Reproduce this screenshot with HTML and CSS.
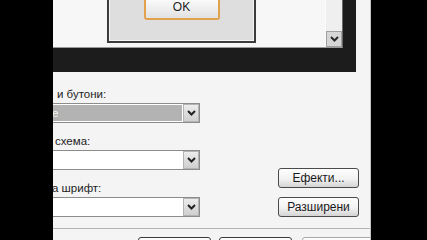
FILE: index.html
```html
<!DOCTYPE html>
<html lang="bg">
    <head>
        <meta charset="UTF-8">
        <title>Свойства на дисплея</title>
        <link rel="stylesheet" href="styles.css">
    </head>
    <body>
        <div class="dlg">
            <div class="preview">
                <div class="monitor">
                    <div class="screen">
                        <div class="msgbox">
                            <div class="okbtn">OK</div>
                        </div>
                        <div class="scroll">
                            <div class="sbtn">
                                <svg width="9" height="6" viewBox="0 0 9 6"><polyline points="1,1 4.5,4.5 8,1" fill="none" stroke="#2a2a2a" stroke-width="2"/></svg>
                            </div>
                        </div>
                    </div>
                </div>
            </div>

            <div class="form">
                <div class="fields">
                    <div class="lbl l1">и бутони:</div>
                    <div class="combo sel">
                        <span class="val">е</span>
                        <span class="drop"><svg width="9" height="6" viewBox="0 0 9 6"><polyline points="1,1 4.5,4.5 8,1" fill="none" stroke="#222" stroke-width="2"/></svg></span>
                    </div>

                    <div class="lbl l2">схема:</div>
                    <div class="combo">
                        <span class="val"></span>
                        <span class="drop"><svg width="9" height="6" viewBox="0 0 9 6"><polyline points="1,1 4.5,4.5 8,1" fill="none" stroke="#222" stroke-width="2"/></svg></span>
                    </div>

                    <div class="lbl l3">а шрифт:</div>
                    <div class="combo">
                        <span class="val"></span>
                        <span class="drop"><svg width="9" height="6" viewBox="0 0 9 6"><polyline points="1,1 4.5,4.5 8,1" fill="none" stroke="#222" stroke-width="2"/></svg></span>
                    </div>
                </div>
                <div class="side">
                    <div class="btn">Ефекти...</div>
                    <div class="btn">Разширени</div>
                </div>
            </div>

            <div class="divider"></div>

            <div class="foot">
                <div class="fbtn"></div>
                <div class="fbtn"></div>
                <div class="fbtn off"></div>
            </div>
        </div>
    </body>
</html>
```

FILE: styles.css
```css
body {
    margin: 0;
    background: #000;
    height: 240px;
    overflow: hidden;
}

.dlg {
    margin-left: 53px;
    width: 318px;
    height: 240px;
    box-sizing: border-box;
    background: #f4f4f4;
    border-right: 1px solid #c4c4c4;
    overflow: hidden;
    font-family: "Liberation Sans", Arial, sans-serif;
    font-size: 11.5px;
    color: #1e1e1e;
}

/* монитор с превю */
.preview {
    display: flex;
    height: 72px;
}

.monitor {
    width: 303px;
    height: 72px;
    box-sizing: border-box;
    background: #1c1c1c;
    padding: 0 13px 24px 0;
}

.screen {
    display: flex;
    height: 48px;
    box-sizing: border-box;
    background: #f7f7f7;
    border-right: 1px solid #6a6a6a;
    border-bottom: 1px solid #9a9a9a;
}

.msgbox {
    margin-left: 54px;
    width: 149px;
    height: 43px;
    box-sizing: border-box;
    border: 2px solid #3c3c3c;
    border-top: 0;
    background: #dedede;
    box-shadow: inset 1px -1px 0 #f4f4f4, inset -1px 0 0 #f4f4f4;
    display: flex;
    justify-content: center;
}

.okbtn {
    width: 76px;
    height: 20px;
    box-sizing: border-box;
    border: 2px solid #e3a04e;
    border-top: 0;
    border-radius: 0 0 3px 3px;
    background: linear-gradient(#fafafa, #e2e2e2);
    text-align: center;
    font-size: 12px;
    line-height: 14px;
    color: #222;
}

.scroll {
    margin-left: auto;
    width: 16px;
    display: flex;
    flex-direction: column;
    background: #efefef;
    border-left: 1px solid #fbfbfb;
}

.sbtn {
    margin-top: auto;
    height: 16px;
    box-sizing: border-box;
    border: 1px solid #a0a0a0;
    background: #d6d6d6;
    display: flex;
    align-items: center;
    justify-content: center;
}

/* полета */
.form {
    display: flex;
    align-items: flex-end;
    padding-top: 15px;
}

.fields {
    width: 147px;
}

.lbl {
    height: 14px;
    line-height: 14px;
    white-space: nowrap;
}

.l1 {
    padding-left: 4px;
}

.l2 {
    margin-top: 11px;
    padding-left: 2px;
}

.l3 {
    margin-top: 11px;
    margin-left: -1px;
}

.combo {
    margin-top: 2px;
    height: 20px;
    box-sizing: border-box;
    border: 1px solid #8c8c8c;
    border-left: 0;
    background: #fff;
    display: flex;
}

.combo .val {
    flex: 1;
    line-height: 18px;
}

.combo.sel .val {
    margin: 1px 1px 1px 0;
    background: #b3b3b3;
    color: #f6f6f6;
    line-height: 16px;
    text-indent: -1px;
}

.drop {
    width: 16px;
    height: 18px;
    box-sizing: border-box;
    border: 1px solid #b4b4b4;
    background: linear-gradient(#ececec, #cfcfcf);
    display: flex;
    align-items: center;
    justify-content: center;
}

.side {
    margin-left: 78px;
    width: 81px;
    display: flex;
    flex-direction: column;
    gap: 9px;
}

.btn {
    height: 20px;
    box-sizing: border-box;
    border: 1px solid #4a4a4a;
    border-radius: 3px;
    background: linear-gradient(#fefefe, #f2f2f2 55%, #d4d4d4);
    text-align: center;
    line-height: 18px;
    font-size: 12px;
    color: #1a1a1a;
}

.divider {
    margin-top: 11px;
    height: 1px;
    background: #b4b4b4;
}

.foot {
    display: flex;
    gap: 8px;
    padding-left: 85px;
    margin-top: 8px;
}

.fbtn {
    width: 73px;
    height: 20px;
    flex-shrink: 0;
    box-sizing: border-box;
    border: 1px solid #3a3a3a;
    border-radius: 3px;
    background: linear-gradient(#fefefe, #e6e6e6);
}

.fbtn.off {
    margin-left: 2px;
    border-color: #a8a8a8;
}
```
